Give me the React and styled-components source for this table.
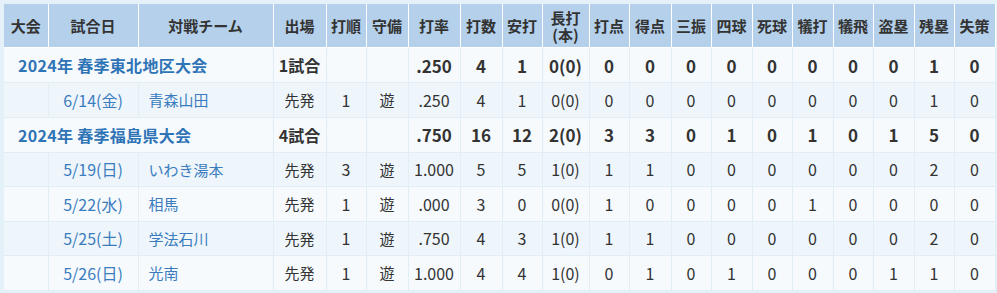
import React from 'react'
import styled, { createGlobalStyle } from 'styled-components'

const GlobalStyle = createGlobalStyle`
  html, body {
    margin: 0;
    padding: 0;
    background: #e4f1f8;
  }
  body {
    font-family: "Noto Sans CJK JP", "Noto Sans", sans-serif;
    color: #333;
  }
`

const widths = [44, 90, 135, 53, 40, 42, 52, 42, 40, 47, 40, 42, 40, 41, 40, 41, 40, 41, 40, 41]

const headers = ['大会', '試合日', '対戦チーム', '出場', '打順', '守備', '打率', '打数', '安打', '長打\n(本)',
  '打点', '得点', '三振', '四球', '死球', '犠打', '犠飛', '盗塁', '残塁', '失策']

const groups = [
  {
    title: '2024年 春季東北地区大会',
    games: '1試合',
    stats: ['.250', '4', '1', '0(0)', '0', '0', '0', '0', '0', '0', '0', '0', '1', '0'],
    rows: [
      { date: '6/14(金)', team: '青森山田', start: '先発', order: '1', pos: '遊',
        stats: ['.250', '4', '1', '0(0)', '0', '0', '0', '0', '0', '0', '0', '0', '1', '0'] },
    ],
  },
  {
    title: '2024年 春季福島県大会',
    games: '4試合',
    stats: ['.750', '16', '12', '2(0)', '3', '3', '0', '1', '0', '1', '0', '1', '5', '0'],
    rows: [
      { date: '5/19(日)', team: 'いわき湯本', start: '先発', order: '3', pos: '遊',
        stats: ['1.000', '5', '5', '1(0)', '1', '1', '0', '0', '0', '0', '0', '0', '2', '0'] },
      { date: '5/22(水)', team: '相馬', start: '先発', order: '1', pos: '遊',
        stats: ['.000', '3', '0', '0(0)', '1', '0', '0', '0', '0', '1', '0', '0', '0', '0'] },
      { date: '5/25(土)', team: '学法石川', start: '先発', order: '1', pos: '遊',
        stats: ['.750', '4', '3', '1(0)', '1', '1', '0', '0', '0', '0', '0', '0', '2', '0'] },
      { date: '5/26(日)', team: '光南', start: '先発', order: '1', pos: '遊',
        stats: ['1.000', '4', '4', '1(0)', '0', '1', '0', '1', '0', '0', '0', '1', '1', '0'] },
    ],
  },
]

const Wrapper = styled.div`
  padding: 4px 2px 4px 4px;
  background: #e4f1f8;
`

const Table = styled.table`
  border-collapse: collapse;
  table-layout: fixed;
  width: 991px;
`

const Th = styled.th`
  background: #b4d0eb;
  border: 1px solid #ffffff;
  border-top: none;
  height: 43px;
  padding: 0;
  font-size: 15px;
  font-weight: 700;
  line-height: 17px;
  color: #333;
  white-space: pre-line;
  text-align: center;
  &:first-child { border-left: none; }
`

const SummaryRow = styled.tr`
  background: #f6fafd;
  height: 35px;
`

const DetailRow = styled.tr`
  background: ${p => (p.$alt ? '#f6fafd' : '#eef6fb')};
  height: 34.5px;
`

const Td = styled.td`
  border: 1px solid #e2eef6;
  padding: 0;
  text-align: ${p => p.$align || 'center'};
  padding-left: ${p => (p.$align === 'left' ? p.$indent || 0 : 0)}px;
  font-size: ${p => p.$size || 15}px;
  font-weight: ${p => (p.$bold ? 700 : 400)};
  color: ${p => p.$color || '#333'};
  white-space: nowrap;
  &:first-child { border-left: none; }
`

const SummaryTitle = styled(Td)`
  font-size: 16px;
  letter-spacing: 0.3px;
  color: #2f74b6;
`

export default function App() {
  return (
    <Wrapper>
      <GlobalStyle />
      <Table>
        <colgroup>
          {widths.map((w, i) => <col key={i} style={{ width: w }} />)}
        </colgroup>
        <thead>
          <tr>
            {headers.map(h => <Th key={h}>{h}</Th>)}
          </tr>
        </thead>
        <tbody>
          {groups.map(g => (
            <React.Fragment key={g.title}>
              <SummaryRow>
                <SummaryTitle colSpan={3} $align="left" $indent={14} $bold>{g.title}</SummaryTitle>
                <Td $bold $size={16}>{g.games}</Td>
                <Td />
                <Td />
                {g.stats.map((s, i) => <Td key={i} $bold $size={17}>{s}</Td>)}
              </SummaryRow>
              {g.rows.map((r, ri) => (
                <DetailRow key={r.date} $alt={ri % 2 === 1}>
                  <Td />
                  <Td $color="#3b7cbf" $size={16}>{r.date}</Td>
                  <Td $align="left" $indent={10} $color="#3b7cbf">{r.team}</Td>
                  <Td>{r.start}</Td>
                  <Td $size={16}>{r.order}</Td>
                  <Td>{r.pos}</Td>
                  {r.stats.map((s, i) => <Td key={i} $size={16}>{s}</Td>)}
                </DetailRow>
              ))}
            </React.Fragment>
          ))}
        </tbody>
      </Table>
    </Wrapper>
  )
}
